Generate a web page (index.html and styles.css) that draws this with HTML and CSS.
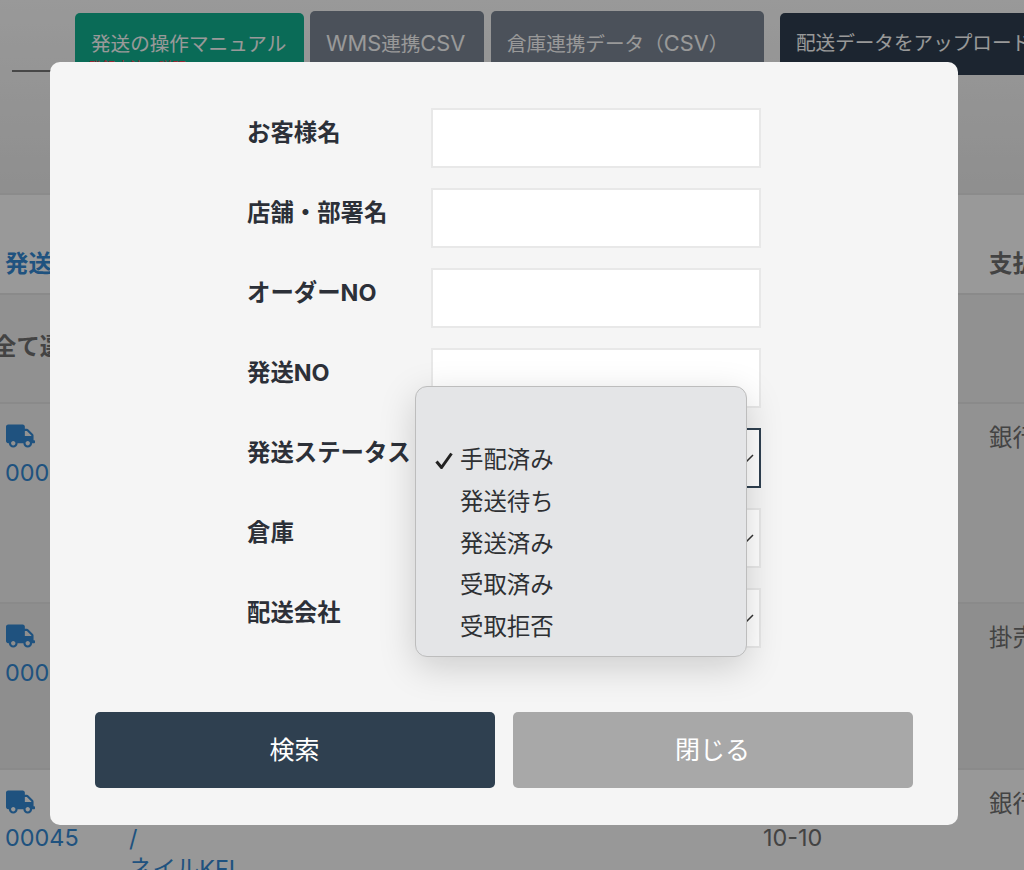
FILE: index.html
```html
<!DOCTYPE html>
<html lang="ja">
<head>
    <meta charset="UTF-8">
    <meta name="viewport" content="width=device-width, initial-scale=1.0">
    <title>配送一覧</title>
    <link rel="stylesheet" href="styles.css">
</head>
<body>

<!-- 背面の一覧ページ -->
<div class="page">
    <div class="top-bar">
        <div class="title-rule"></div>
        <a class="btn btn-green">発送の操作マニュアル<span class="btn-note">登録方法の説明</span></a>
        <a class="btn btn-gray"><span class="latin">WMS</span>連携<span class="latin">CSV</span></a>
        <a class="btn btn-gray btn-wide">倉庫連携データ（<span class="latin">CSV</span>）</a>
        <a class="btn btn-navy">配送データをアップロード</a>
    </div>

    <div class="row row-head">
        <div class="cell-no">発送NO</div>
        <div class="cell-name"></div>
        <div class="cell-date"></div>
        <div class="cell-pay">支払方法</div>
    </div>
    <div class="row row-all">
        <div class="cell-no">全て選択</div>
    </div>
    <div class="row row-one">
        <div class="cell-no">
            <svg class="truck" viewBox="0 0 640 512"><path d="M624 352h-16V243.9c0-12.7-5.1-24.9-14.1-33.9L494 110.1c-9-9-21.2-14.1-33.9-14.1H416V48c0-26.5-21.5-48-48-48H48C21.5 0 0 21.5 0 48v320c0 26.5 21.5 48 48 48h16c0 53 43 96 96 96s96-43 96-96h128c0 53 43 96 96 96s96-43 96-96h48c8.8 0 16-7.2 16-16v-32c0-8.8-7.2-16-16-16zM160 464c-26.5 0-48-21.5-48-48s21.5-48 48-48 48 21.5 48 48-21.5 48-48 48zm320 0c-26.5 0-48-21.5-48-48s21.5-48 48-48 48 21.5 48 48-21.5 48-48 48zm80-208H416V144h44.1l99.9 99.9V256z"/></svg>
            <div>00047</div>
        </div>
        <div class="cell-pay">銀行振込</div>
    </div>
    <div class="row row-two">
        <div class="cell-no">
            <svg class="truck" viewBox="0 0 640 512"><path d="M624 352h-16V243.9c0-12.7-5.1-24.9-14.1-33.9L494 110.1c-9-9-21.2-14.1-33.9-14.1H416V48c0-26.5-21.5-48-48-48H48C21.5 0 0 21.5 0 48v320c0 26.5 21.5 48 48 48h16c0 53 43 96 96 96s96-43 96-96h128c0 53 43 96 96 96s96-43 96-96h48c8.8 0 16-7.2 16-16v-32c0-8.8-7.2-16-16-16zM160 464c-26.5 0-48-21.5-48-48s21.5-48 48-48 48 21.5 48 48-21.5 48-48 48zm320 0c-26.5 0-48-21.5-48-48s21.5-48 48-48 48 21.5 48 48-21.5 48-48 48zm80-208H416V144h44.1l99.9 99.9V256z"/></svg>
            <div>00046</div>
        </div>
        <div class="cell-pay">掛売</div>
    </div>
    <div class="row row-three">
        <div class="cell-no">
            <svg class="truck" viewBox="0 0 640 512"><path d="M624 352h-16V243.9c0-12.7-5.1-24.9-14.1-33.9L494 110.1c-9-9-21.2-14.1-33.9-14.1H416V48c0-26.5-21.5-48-48-48H48C21.5 0 0 21.5 0 48v320c0 26.5 21.5 48 48 48h16c0 53 43 96 96 96s96-43 96-96h128c0 53 43 96 96 96s96-43 96-96h48c8.8 0 16-7.2 16-16v-32c0-8.8-7.2-16-16-16zM160 464c-26.5 0-48-21.5-48-48s21.5-48 48-48 48 21.5 48 48-21.5 48-48 48zm320 0c-26.5 0-48-21.5-48-48s21.5-48 48-48 48 21.5 48 48-21.5 48-48 48zm80-208H416V144h44.1l99.9 99.9V256z"/></svg>
            <div>00045</div>
        </div>
        <div class="cell-name">
            <div class="slash">/</div>
            <div>ネイルKFL</div>
        </div>
        <div class="cell-date">10-10</div>
        <div class="cell-pay">銀行振込</div>
    </div>
</div>

<!-- 検索モーダル -->
<div class="overlay">
    <div class="modal">
        <form class="search-form">
            <div class="form-row">
                <label>お客様名</label>
                <input type="text" class="field">
            </div>
            <div class="form-row">
                <label>店舗・部署名</label>
                <input type="text" class="field">
            </div>
            <div class="form-row">
                <label>オーダーNO</label>
                <input type="text" class="field">
            </div>
            <div class="form-row">
                <label>発送NO</label>
                <input type="text" class="field">
            </div>
            <div class="form-row">
                <label>発送ステータス</label>
                <div class="field select-field focused">
                    <svg class="chevron" viewBox="0 0 14 8"><path d="M1 1l6 6 6-6"/></svg>
                </div>
            </div>
            <div class="form-row">
                <label>倉庫</label>
                <div class="field select-field">
                    <svg class="chevron" viewBox="0 0 14 8"><path d="M1 1l6 6 6-6"/></svg>
                </div>
            </div>
            <div class="form-row">
                <label>配送会社</label>
                <div class="field select-field">
                    <svg class="chevron" viewBox="0 0 14 8"><path d="M1 1l6 6 6-6"/></svg>
                </div>
            </div>
        </form>

        <div class="modal-buttons">
            <button class="action action-search">検索</button>
            <button class="action action-close">閉じる</button>
        </div>

        <!-- 開いているプルダウン -->
        <ul class="menu">
            <li class="menu-item">
                <svg class="check" viewBox="0 0 18 17"><path d="M1.5 9.5l5 6L16.5 1.5"/></svg>
                手配済み
            </li>
            <li class="menu-item">発送待ち</li>
            <li class="menu-item">発送済み</li>
            <li class="menu-item">受取済み</li>
            <li class="menu-item">受取拒否</li>
        </ul>
    </div>
</div>

</body>
</html>
```

FILE: styles.css
```css
body {
    margin: 0;
    height: 870px;
    overflow: hidden;
    background-color: #fff;
    font-family: Inter, "Noto Sans CJK JP", sans-serif;
    font-size: 23.4px;
    color: #717171;
    text-spacing-trim: space-all;
}
.page {
    height: 870px;
    overflow: hidden;
}

/* top bar */
.top-bar {
    display: flex;
    align-items: flex-start;
    height: 195px;
    box-sizing: border-box;
    border-bottom: 2px solid #e8e8e8;
    padding-top: 11px;
    background: linear-gradient(#fff, #eeeeee);
    white-space: nowrap;
}
.title-rule {
    flex: none;
    width: 63px;
    margin: 59px 0 0 12px;
    border-top: 2px solid #777;
}
.btn {
    flex: none;
    box-sizing: border-box;
    height: 62px;
    padding: 18px 16px 0;
    border-radius: 5px;
    font-size: 19.6px;
    line-height: 28px;
    color: #fff;
}
.latin {
    font-size: 21.8px;
}
.btn-green {
    width: 229px;
    margin-top: 2px;
    padding-top: 17px;
    background-color: #12b291;
}
.btn-note {
    display: block;
    margin: 0 0 0 -3px;
    font-size: 14px;
    line-height: 18px;
    color: #ff4054;
}
.btn-gray {
    width: 174px;
    margin-left: 6px;
    background-color: #7d8796;
}
.btn-wide {
    width: 273px;
    margin-left: 7px;
}
.btn-navy {
    width: 300px;
    margin: 2px 0 0 16px;
    padding-top: 16px;
    background-color: #2f3f50;
}

/* table rows */
.row {
    display: flex;
    box-sizing: border-box;
    border-bottom: 2px solid #e6e6e6;
    white-space: nowrap;
}
.cell-no {
    flex: none;
    width: 124px;
    padding-left: 5px;
    color: #3489d4;
}
.cell-name {
    flex: none;
    width: 634px;
    color: #3489d4;
}
.cell-date {
    flex: none;
    width: 226px;
}
.cell-pay {
    flex: none;
    width: 226px;
}
.row-head {
    height: 100px;
    padding-top: 50px;
    font-weight: 700;
    background-color: #ffffff;
}
.row-head .cell-pay {
    color: #717171;
}
.row-all {
    height: 109px;
    padding-top: 33px;
    font-weight: 700;
    background-color: #f2f2f2;
}
.row-all .cell-no {
    margin-left: -12px;
    color: #717171;
}
.row-one,
.row-two,
.row-three {
    padding-top: 20px;
}
.row-one .cell-no,
.row-two .cell-no {
    width: 984px;
}
.row-one .cell-pay,
.row-two .cell-pay,
.row-three .cell-pay {
    margin-top: -5px;
}
.row-one {
    height: 200px;
    background-color: #f3f3f3;
}
.row-two {
    height: 166px;
    background-color: #ededed;
}
.row-three {
    height: 100px;
    border-bottom: 0;
    background-color: #fdfdfd;
}
.truck {
    display: block;
    width: 29px;
    height: 24px;
    margin: 0 0 10px 1px;
    fill: #3489d4;
}
.row-three .truck {
    margin-bottom: 9px;
}
.row-three .cell-name {
    margin-top: 34px;
    line-height: 30px;
}
.row-three .cell-date {
    margin-top: 33px;
    color: #717171;
}

/* modal */
.overlay {
    position: fixed;
    top: 0;
    left: 0;
    right: 0;
    bottom: 0;
    box-sizing: border-box;
    padding: 62px 66px 45px 50px;
    background-color: rgba(0, 0, 0, 0.4);
}
.modal {
    position: relative;
    box-sizing: border-box;
    height: 763px;
    padding: 46px 45px 37px;
    background-color: #f5f5f5;
    border-radius: 10px;
    color: #2c3038;
}
.search-form {
    display: flex;
    flex-direction: column;
    gap: 20px;
    width: 514px;
    margin-left: 152px;
}
.form-row {
    display: flex;
    align-items: center;
}
.form-row label {
    flex: none;
    width: 184px;
    margin-top: -14px;
    font-weight: 700;
    white-space: nowrap;
}
.field {
    box-sizing: border-box;
    width: 330px;
    height: 60px;
    margin: 0;
    border: 2px solid #e8e8e8;
    border-radius: 0;
    background-color: #fff;
    outline: none;
}
.select-field {
    display: flex;
    align-items: center;
    justify-content: flex-end;
    padding-right: 5px;
}
.focused {
    border: 2px solid #2f4050;
}
.chevron {
    width: 14px;
    height: 8px;
    fill: none;
    stroke: #333;
    stroke-width: 1.5;
}
.modal-buttons {
    display: flex;
    justify-content: space-between;
    margin-top: 64px;
}
.action {
    width: 400px;
    height: 76px;
    padding: 0 1px 4px 0;
    border: none;
    border-radius: 5px;
    font-family: inherit;
    font-size: 25px;
    color: #fff;
}
.action-search {
    background-color: #2f4050;
}
.action-close {
    background-color: #a8a8a8;
}
.menu {
    position: absolute;
    top: 324px;
    left: 365px;
    width: 332px;
    height: 271px;
    box-sizing: border-box;
    margin: 0;
    padding: 52px 0 0;
    list-style: none;
    background-color: #e4e5e7;
    border: 1px solid #bdbdbd;
    border-radius: 12px;
    box-shadow: 0 10px 36px rgba(0, 0, 0, 0.17);
    color: #2e3033;
}
.menu-item {
    position: relative;
    height: 41.8px;
    padding-left: 44px;
    line-height: 41.8px;
}
.check {
    position: absolute;
    top: 13px;
    left: 19px;
    width: 18px;
    height: 17px;
    fill: none;
    stroke: #222;
    stroke-width: 3;
}
```
